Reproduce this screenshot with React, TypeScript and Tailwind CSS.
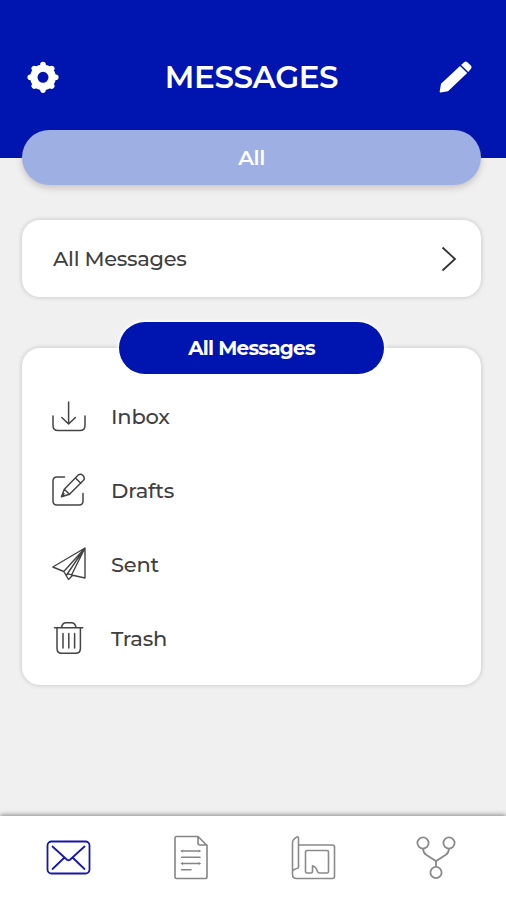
import type { ReactNode } from 'react';

interface MenuItem {
  label: string;
  icon: ReactNode;
}

function GearIcon() {
  return (
    <svg width="32" height="32" viewBox="0 0 32 32" fill="none" stroke="white">
      <circle cx="16" cy="16.300" r="9.200" strokeWidth="7.400" />
      <g strokeWidth="5.600" strokeLinecap="round">
        <path d="M16 3.500v3M16 29.100v-3M3.200 16.300h3M28.800 16.300h-3" />
        <path d="M7.300 7.600l2 2M24.700 25l-2-2M7.300 25l2-2M24.700 7.600l-2 2" />
      </g>
    </svg>
  );
}

function PencilIcon() {
  return (
    <svg width="33" height="32" viewBox="0 0 33 32" fill="white">
      <path d="M.7 30.500 2 22.800 21 4.900l7.200 7L9 30.200 1.600 31.500Q.5 31.700.7 30.500Z" />
      <path d="M22.100 4 25.200 1.200Q26.700-.1 28.300 1.200L31.800 4.600Q33.200 6.200 31.900 7.800L29.300 10.900Z" />
    </svg>
  );
}

function InboxIcon() {
  return (
    <svg width="36" height="36" viewBox="0 0 36 36" fill="none" stroke="#444" strokeWidth="1.500" strokeLinecap="round">
      <path d="M2 17v9.500q0 5 5 5h22q5 0 5-5V17M17.600 3v22M10.800 18.500l6.800 6.500 6.800-6.500" />
    </svg>
  );
}

function DraftsIcon() {
  return (
    <svg width="36" height="36" viewBox="0 0 36 36" fill="none" stroke="#444" strokeWidth="1.500" strokeLinecap="round" strokeLinejoin="round">
      <path d="M13.500 4H6Q2 4 2 8v20q0 4 4 4h22q4 0 4-4v-7.500" />
      <path d="m10.500 23.800 2.800-7.600L27 2.200q2.500-2 5 .3 2.400 2.500.3 5L18.500 21.200ZM24.500 5l5.300 5.200M13.300 16.200l5.200 5M10.500 23.800l2.500-3" />
    </svg>
  );
}

function SentIcon() {
  return (
    <svg width="36" height="36" viewBox="0 0 36 36" fill="none" stroke="#444" strokeWidth="1.400" strokeLinejoin="round">
      <path d="M34 1 1.800 20l11 4.500L34 1v30l-13.500-3L34 1M12.800 24.500l4.700 8 4.200-4.300M15.500 28 34 1M15.500 28q2-1.800 5 0" />
    </svg>
  );
}

function TrashIcon() {
  return (
    <svg width="36" height="36" viewBox="0 0 36 36" fill="none" stroke="#444" strokeWidth="1.500" strokeLinecap="round">
      <path d="M3.500 6.700h28.200M10.500 6.200q1-4.500 4.500-4.500h5.500Q24 1.700 25 6.200M6 7.500v20q0 4.800 4.800 4.800h13.800q4.800 0 4.800-4.800V7.500" />
      <path d="M12 12.500V27M17.800 12.500V27M23.600 12.500V27" />
    </svg>
  );
}

function MailIcon() {
  return (
    <svg width="46" height="46" viewBox="0 0 46 46" fill="none" stroke="#1717ab" strokeWidth="1.800" strokeLinecap="round">
      <rect x="2.500" y="6.500" width="42" height="32" rx="4" />
      <path d="m7.500 11.500 14.500 13.200q1.500 1.200 3 0l14.500-13.200M7.500 34l12-11.500M39.500 34l-12-11.500" />
    </svg>
  );
}

function DocumentIcon() {
  return (
    <svg width="46" height="46" viewBox="0 0 46 46" fill="none" stroke="#858585" strokeWidth="1.600" strokeLinecap="round" strokeLinejoin="round">
      <path d="M8.500 1.500H30l9 9v31.500q0 1.500-1.500 1.500H8.500Q7 43.500 7 42V3Q7 1.500 8.500 1.500ZM30 1.500V8q0 2 2 2h7" />
      <path d="M13.500 16h18.500M13.500 22.300h18.500M13.500 28.500h18.500M13.500 34.700h9.500" />
      <path d="m14.500 15-1 1 1 1M31 15l1 1-1 1M14.500 27.500l-1 1 1 1M31 27.500l1 1-1 1" strokeWidth="1" />
    </svg>
  );
}

function PlanIcon() {
  return (
    <svg width="46" height="46" viewBox="0 0 46 46" fill="none" stroke="#8a8a8a" strokeWidth="1.600" strokeLinejoin="round">
      <path d="M8.500 33V3.200Q8.500 1 6.500 2.200L3.500 4.700Q2.500 5.700 2.500 8v31.500q0 4 4 4h36q2 0 2-2V12q0-2-2-2h-34M2.500 36.500q1-2.500 6-3.500" />
      <path d="M17 15.500h20q1.500 0 1.500 1.500v19.500q0 1.500-1.500 1.500h-7.500q-1.500 0-2-1.500-1.500-4.800-5-5.800v5.800q0 1.500-1.500 1.500h-4q-1.500 0-1.500-1.500v-19.500q0-1.500 1.500-1.500Z" />
    </svg>
  );
}

function BranchIcon() {
  return (
    <svg width="46" height="46" viewBox="0 0 46 46" fill="none" stroke="#8a8a8a" strokeWidth="1.800">
      <circle cx="10" cy="8" r="5.600" />
      <circle cx="36" cy="8" r="5.600" />
      <circle cx="23" cy="37.500" r="5.600" />
      <path d="M10 13.600q.3 4.500 3.500 6.500l9.500 6 9.500-6q3.200-2 3.500-6.500M23 26v5.900" />
    </svg>
  );
}

const folders: MenuItem[] = [
  { label: 'Inbox', icon: <InboxIcon /> },
  { label: 'Drafts', icon: <DraftsIcon /> },
  { label: 'Sent', icon: <SentIcon /> },
  { label: 'Trash', icon: <TrashIcon /> },
];

const tabs: MenuItem[] = [
  { label: 'Messages', icon: <MailIcon /> },
  { label: 'Documents', icon: <DocumentIcon /> },
  { label: 'Plans', icon: <PlanIcon /> },
  { label: 'Workflow', icon: <BranchIcon /> },
];

export default function App() {
  return (
    <div className="flex h-[900px] w-full flex-col overflow-hidden bg-[#f0f0f0] font-[Montserrat,Inter,sans-serif] text-[#3f3f3f]">
      <header className="flex h-[158px] shrink-0 items-start justify-between bg-[#0015b0] pt-[57px] pr-[34px] pl-[27px]">
        <button aria-label="Settings" className="flex h-10 items-center">
          <GearIcon />
        </button>
        <h1 className="pl-[5px] text-[31px] leading-10 font-semibold tracking-[-0.4px] text-white">MESSAGES</h1>
        <button aria-label="Compose" className="flex h-10 items-center">
          <PencilIcon />
        </button>
      </header>

      <main className="flex grow flex-col pr-[25px] pl-[22px]">
        <button className="-mt-7 h-[55px] shrink-0 rounded-full bg-[#9eafe4] text-[21px] font-semibold tracking-[-0.4px] text-white shadow-[0_3px_6px_rgba(90,70,50,0.25)]">
          All
        </button>

        <button className="mt-[35px] flex h-[77px] shrink-0 items-center justify-between rounded-[18px] bg-white pr-[24px] pl-[31px] shadow-[0_0_5px_rgba(0,0,0,0.2)]">
          <span className="text-[21px] font-medium tracking-[-0.3px]">All Messages</span>
          <svg width="16" height="26" viewBox="0 0 16 26" fill="none" stroke="#333" strokeWidth="1.800">
            <path d="m1.500 1.500 12.500 11.500-12.500 11.500" />
          </svg>
        </button>

        <section className="mt-[51px] flex h-[337px] shrink-0 flex-col rounded-[18px] bg-white shadow-[0_0_5px_rgba(0,0,0,0.2)]">
          <h2 className="-mt-[26px] ml-[97px] flex h-[52px] w-[265px] shrink-0 items-center justify-center rounded-full bg-[#0015b0] text-[20px] font-bold tracking-[-0.75px] text-white shadow-[0_0_3px_2px_rgba(255,255,255,0.7)]">
            All Messages
          </h2>
          <ul className="mt-[6px]">
            {folders.map((item) => (
              <li key={item.label} className="flex h-[74px] items-center gap-6 pl-[29px] text-[21px] font-medium tracking-[-0.2px]">
                {item.icon}
                <span>{item.label}</span>
              </li>
            ))}
          </ul>
        </section>
      </main>

      <nav className="flex h-[84px] shrink-0 items-center justify-between bg-white pr-[47px] pl-[45px] shadow-[0_-1px_5px_rgba(0,0,0,0.45)]">
        {tabs.map((tab) => (
          <button key={tab.label} aria-label={tab.label}>
            {tab.icon}
          </button>
        ))}
      </nav>
    </div>
  );
}
